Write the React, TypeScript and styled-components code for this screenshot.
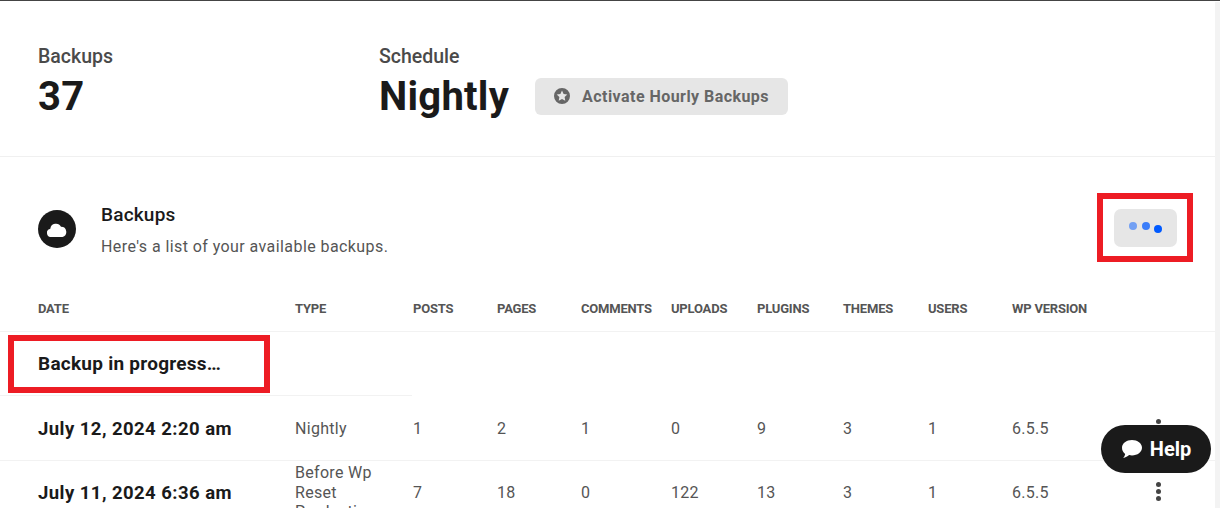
import styled, { createGlobalStyle } from "styled-components";

const GlobalStyle = createGlobalStyle`
  html, body {
    margin: 0;
    padding: 0;
    height: 508px;
    overflow: hidden;
    background: #fff;
  }
`;

const Page = styled.div`
  position: relative;
  display: flex;
  width: 1220px;
  height: 508px;
  box-sizing: border-box;
  overflow: hidden;
  border-top: 1px solid #444;
  background: #fff;
  font-family: Roboto, "Liberation Sans", sans-serif;
  color: #1a1a1a;
`;

const Main = styled.main`
  flex: 1;
  min-width: 0;
`;

const ScrollTrack = styled.div`
  width: 5px;
  margin-top: 1px;
  background: #f3f3f3;
`;

const Stats = styled.section`
  display: flex;
  height: 156px;
  box-sizing: border-box;
  padding: 45px 38px 0;
  border-bottom: 1px solid #f0f0f0;
`;

const Stat = styled.div<{ $width: number }>`
  width: ${(props) => props.$width + "px"};
`;

const StatLabel = styled.div`
  font-size: 19.5px;
  line-height: 22px;
  font-weight: 500;
  color: #4a4a4a;
`;

const StatValue = styled.div`
  margin-top: 5px;
  font-size: 40px;
  line-height: 48px;
  font-weight: 700;
  letter-spacing: 0.25px;
  color: #1a1a1a;
`;

const ValueRow = styled.div`
  display: flex;
  align-items: center;
  gap: 26px;
`;

const UpgradeButton = styled.button`
  display: flex;
  align-items: center;
  gap: 12px;
  width: 253px;
  height: 37px;
  margin-top: 3px;
  padding: 0 0 0 19px;
  border: 0;
  border-radius: 6px;
  background: #e6e6e6;
  color: #666;
  font-family: inherit;
  font-size: 16px;
  font-weight: 700;
  letter-spacing: 0.45px;
`;

const Header = styled.header`
  display: flex;
  align-items: center;
  height: 133px;
  padding: 0 38px;
`;

const HeaderIcon = styled.div`
  display: flex;
  align-items: center;
  justify-content: center;
  width: 38px;
  height: 38px;
  margin-top: 11px;
  border-radius: 50%;
  background: #1a1a1a;
`;

const HeaderText = styled.div`
  flex: 1;
  margin: 14px 0 0 25px;
`;

const Title = styled.h2`
  margin: 0;
  font-size: 19px;
  line-height: 22px;
  font-weight: 500;
  letter-spacing: 0.2px;
  color: #1a1a1a;
`;

const Subtitle = styled.p`
  margin: 10px 0 0;
  font-size: 16px;
  line-height: 22px;
  letter-spacing: 0.42px;
  color: #555;
`;

const Highlight = styled.div`
  position: absolute;
  box-sizing: border-box;
  border: 6px solid #ed1c24;
  pointer-events: none;
`;

const MenuHighlight = styled(Highlight)`
  left: 1097px;
  top: 192px;
  width: 96px;
  height: 69px;
`;

const ProgressHighlight = styled(Highlight)`
  left: 8px;
  top: 334px;
  width: 262px;
  height: 58px;
`;

const LoadingButton = styled.div`
  display: flex;
  justify-content: center;
  gap: 4.5px;
  width: 63px;
  height: 38px;
  margin: 9px 0 0 0;
  box-sizing: border-box;
  padding-top: 13px;
  border-radius: 7px;
  background: #e6e6e6;
`;

const Dot = styled.span<{ $alpha: number; $drop: number }>`
  width: 8px;
  height: 8px;
  border-radius: 50%;
  background: rgba(0, 90, 255, ${(props) => props.$alpha});
  transform: translateY(${(props) => props.$drop + "px"});
`;

const Row = styled.div<{ $height: number; $top?: number }>`
  display: grid;
  grid-template-columns: 257px 118px 84px 84px 90px 86px 86px 85px 84px 1fr 59px;
  align-items: center;
  box-sizing: border-box;
  height: ${(props) => props.$height + "px"};
  padding-left: 38px;
  padding-top: ${(props) => (props.$top ?? 0) + "px"};
  border-bottom: 1px solid #f2f2f2;
`;

const HeadRow = styled(Row)`
  padding-bottom: 5px;
`;

const HeadCell = styled.div`
  font-size: 13px;
  font-weight: 700;
  letter-spacing: -0.2px;
  color: #555;
  white-space: nowrap;
`;

const ProgressRow = styled.div`
  width: 412px;
  height: 64px;
  box-sizing: border-box;
  padding: 21px 0 0 38px;
  border-bottom: 1px solid #f2f2f2;
  font-size: 19px;
  line-height: 22px;
  font-weight: 700;
  letter-spacing: 0.25px;
`;

const DateCell = styled.div`
  font-size: 18.5px;
  font-weight: 700;
  letter-spacing: 0.45px;
  color: #1a1a1a;
  white-space: nowrap;
`;

const Cell = styled.div`
  font-size: 16px;
  line-height: 19.5px;
  letter-spacing: 0.3px;
  color: #555;
`;

const TypeCell = styled(Cell)`
  width: 90px;
`;

const Kebab = styled.div`
  display: flex;
  flex-direction: column;
  gap: 2px;
  width: 5px;
  margin-bottom: 2px;
`;

const KebabDot = styled.span`
  width: 5px;
  height: 5px;
  border-radius: 50%;
  background: #444;
`;

const HelpButton = styled.div`
  position: absolute;
  left: 1101px;
  top: 424px;
  display: flex;
  align-items: center;
  justify-content: center;
  gap: 7px;
  width: 110px;
  height: 48px;
  border-radius: 24px;
  background: #1a1a1a;
  color: #fff;
  font-size: 20px;
  font-weight: 700;
`;

const columns = ["DATE", "TYPE", "POSTS", "PAGES", "COMMENTS", "UPLOADS", "PLUGINS", "THEMES", "USERS", "WP VERSION"];

const backups = [
  { date: "July 12, 2024 2:20 am", type: "Nightly", values: ["1", "2", "1", "0", "9", "3", "1", "6.5.5"], height: 65, top: 2 },
  { date: "July 11, 2024 6:36 am", type: "Before Wp Reset Production", values: ["7", "18", "0", "122", "13", "3", "1", "6.5.5"], height: 64, top: 0 },
];

const StarIcon = () => (
  <svg width="16" height="16" viewBox="0 0 16 16">
    <path
      fillRule="evenodd"
      fill="#666"
      d="M8 0a8 8 0 1 1 0 16A8 8 0 0 1 8 0Zm0 2.600 1.600 3.400 3.700.5-2.700 2.500.7 3.700L8 10.900l-3.300 1.800.7-3.700-2.700-2.500 3.700-.5Z"
    />
  </svg>
);

const CloudIcon = () => (
  <svg width="20" height="15" viewBox="0 0 20 15">
    <path
      fill="#fff"
      d="M4.500 15a4.200 4.200 0 0 1-1.200-8.300A5.700 5.700 0 0 1 14 4.800 5.200 5.200 0 0 1 15.500 15Z"
    />
  </svg>
);

const ChatIcon = () => (
  <svg width="22" height="20" viewBox="0 0 22 20">
    <path
      fill="#fff"
      d="M11 1c5.500 0 10 3.300 10 7.700s-4.500 7.700-10 7.700c-1 0-2-.1-2.900-.3C6.600 17.600 4.500 18.600 2.200 19c1-1.100 1.700-2.500 2-4C2.300 13.600 1 11.300 1 8.700 1 4.300 5.500 1 11 1Z"
    />
  </svg>
);

const App = () => {
  return (
    <Page>
      <GlobalStyle />
      <Main>
        <Stats>
          <Stat $width={341}>
            <StatLabel>Backups</StatLabel>
            <StatValue>37</StatValue>
          </Stat>
          <Stat $width={500}>
            <StatLabel>Schedule</StatLabel>
            <ValueRow>
              <StatValue>Nightly</StatValue>
              <UpgradeButton>
                <StarIcon />
                Activate Hourly Backups
              </UpgradeButton>
            </ValueRow>
          </Stat>
        </Stats>
        <Header>
          <HeaderIcon>
            <CloudIcon />
          </HeaderIcon>
          <HeaderText>
            <Title>Backups</Title>
            <Subtitle>Here's a list of your available backups.</Subtitle>
          </HeaderText>
          <LoadingButton>
            <Dot $alpha={0.5} $drop={0} />
            <Dot $alpha={0.75} $drop={0} />
            <Dot $alpha={1} $drop={3} />
          </LoadingButton>
        </Header>
        <HeadRow $height={42}>
          {columns.map((column) => (
            <HeadCell key={column}>{column}</HeadCell>
          ))}
        </HeadRow>
        <ProgressRow>Backup in progress…</ProgressRow>
        {backups.map((backup) => (
          <Row key={backup.date} $height={backup.height} $top={backup.top}>
            <DateCell>{backup.date}</DateCell>
            <TypeCell>{backup.type}</TypeCell>
            {backup.values.map((value, index) => (
              <Cell key={index}>{value}</Cell>
            ))}
            <Kebab>
              <KebabDot />
              <KebabDot />
              <KebabDot />
            </Kebab>
          </Row>
        ))}
      </Main>
      <ScrollTrack />
      <MenuHighlight />
      <ProgressHighlight />
      <HelpButton>
        <ChatIcon />
        Help
      </HelpButton>
    </Page>
  );
};

export default App;
